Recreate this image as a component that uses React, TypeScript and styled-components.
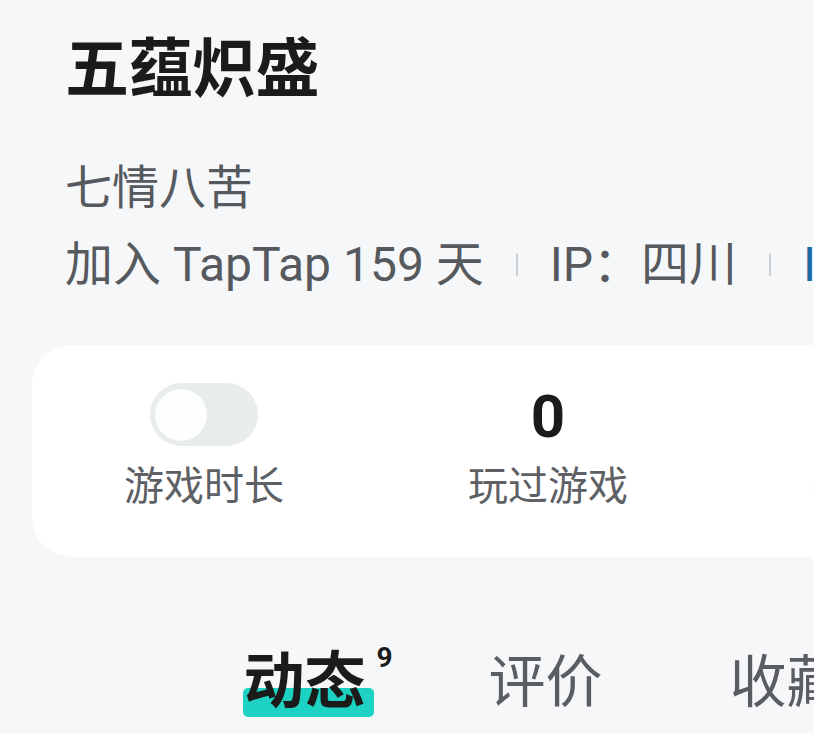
import React from "react";
import styled, { createGlobalStyle } from "styled-components";

const Global = createGlobalStyle`
  html, body {
    margin: 0;
    padding: 0;
    background: #f6f7f9;
    overflow: hidden;
  }
  body {
    font-family: Roboto, "Noto Sans CJK SC", sans-serif;
  }
`;

const Page = styled.div`
  width: 814px;
  height: 733px;
  overflow: hidden;
  background: #f6f7f9;
  padding-top: 23px;
  box-sizing: border-box;
`;

const Header = styled.div`
  padding-left: 65px;
  white-space: nowrap;
`;

const Title = styled.h1`
  margin: 0;
  font-family: "Noto Sans CJK SC", sans-serif;
  font-weight: 700;
  font-size: 64px;
  line-height: 80px;
  color: #1b1b1b;
  letter-spacing: -0.5px;
`;

const Signature = styled.div`
  margin-top: 40px;
  font-size: 47px;
  line-height: 81px;
  color: #56595d;
  font-family: "Noto Sans CJK SC", sans-serif;
`;

const MetaRow = styled.div`
  display: flex;
  align-items: center;
  height: 81px;
  font-size: 48px;
  line-height: 81px;
  color: #56595d;
  white-space: nowrap;
  & > * {
    flex: none;
  }
`;

const MetaText = styled.span<{ $link?: boolean }>`
  color: ${(p) => (p.$link ? "#1f6aa6" : "#56595d")};
`;

const Sep = styled.span`
  display: block;
  width: 2px;
  height: 23px;
  background: #cdd0d3;
  margin: 0 32px 0 32px;
  border-radius: 1px;
`;

const Card = styled.div`
  margin-top: 40px;
  margin-left: 32px;
  width: 1032px;
  height: 212px;
  background: #ffffff;
  border-radius: 40px;
  display: flex;
  padding-top: 38px;
  box-sizing: border-box;
`;

const Stat = styled.div`
  width: 344px;
  flex: none;
  display: flex;
  flex-direction: column;
  align-items: center;
`;

const ValueBox = styled.div`
  height: 63px;
  display: flex;
  align-items: center;
  justify-content: center;
`;

const Value = styled.span`
  font-family: Roboto, sans-serif;
  font-weight: 700;
  font-size: 60px;
  line-height: 63px;
  color: #1b1b1b;
  padding-top: 4px;
`;

const Toggle = styled.div`
  width: 108px;
  height: 63px;
  border-radius: 32px;
  background: #e9eced;
  display: flex;
  align-items: center;
  padding-left: 5px;
  box-sizing: border-box;
`;

const Knob = styled.div`
  width: 52px;
  height: 52px;
  border-radius: 50%;
  background: #fdfefe;
`;

const StatLabel = styled.div`
  margin-top: 12px;
  font-family: "Noto Sans CJK SC", sans-serif;
  font-size: 40px;
  line-height: 50px;
  color: #5d6064;
  white-space: nowrap;
`;

const Tabs = styled.div`
  margin-top: 80px;
  display: flex;
  padding-left: 184px;
  white-space: nowrap;
`;

const Tab = styled.div`
  width: 241px;
  flex: none;
  display: flex;
  justify-content: center;
  height: 80px;
`;

const TabText = styled.span<{ $active?: boolean }>`
  position: relative;
  font-family: "Noto Sans CJK SC", sans-serif;
  font-size: ${(p) => (p.$active ? "61px" : "57px")};
  font-weight: ${(p) => (p.$active ? 700 : 400)};
  line-height: 80px;
  color: ${(p) => (p.$active ? "#1b1b1b" : "#5a5d61")};
`;

const TabLabel = styled.span`
  position: relative;
  z-index: 1;
`;

const Highlight = styled.span`
  position: absolute;
  left: 0;
  right: -8px;
  bottom: 0;
  height: 29px;
  border-radius: 5px;
  background: #1ed2c3;
  z-index: 0;
`;

const Badge = styled.span`
  position: absolute;
  left: calc(100% + 11px);
  top: 7px;
  font-family: Roboto, sans-serif;
  font-weight: 700;
  font-size: 28px;
  line-height: 28px;
  color: #1b1b1b;
`;

export default function App() {
  return (
    <>
      <Global />
      <Page>
        <Header>
          <Title>五蕴炽盛</Title>
          <Signature>七情八苦</Signature>
          <MetaRow>
            <MetaText>加入 TapTap 159 天</MetaText>
            <Sep />
            <MetaText>IP：四川</MetaText>
            <Sep />
            <MetaText $link>ID：325781</MetaText>
          </MetaRow>
        </Header>
        <Card>
          <Stat>
            <ValueBox>
              <Toggle>
                <Knob />
              </Toggle>
            </ValueBox>
            <StatLabel>游戏时长</StatLabel>
          </Stat>
          <Stat>
            <ValueBox>
              <Value>0</Value>
            </ValueBox>
            <StatLabel>玩过游戏</StatLabel>
          </Stat>
          <Stat>
            <ValueBox>
              <Value>0</Value>
            </ValueBox>
            <StatLabel>获得成就</StatLabel>
          </Stat>
        </Card>
        <Tabs>
          <Tab>
            <TabText $active>
              <Highlight />
              <TabLabel>动态</TabLabel>
              <Badge>9</Badge>
            </TabText>
          </Tab>
          <Tab>
            <TabText>评价</TabText>
          </Tab>
          <Tab>
            <TabText>收藏</TabText>
          </Tab>
        </Tabs>
      </Page>
    </>
  );
}
